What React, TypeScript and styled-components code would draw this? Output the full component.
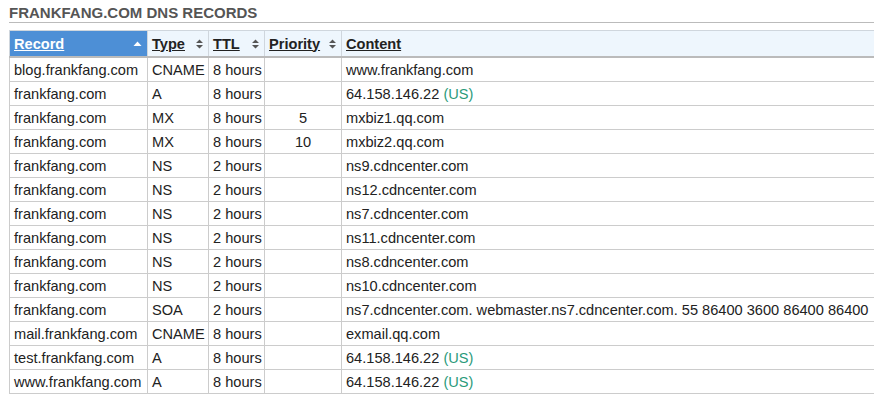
import React from "react";
import styled, { createGlobalStyle } from "styled-components";

const Global = createGlobalStyle`
  html, body { margin: 0; padding: 0; background: #fff; overflow: hidden; }
  body { font-family: "Liberation Sans", Arial, sans-serif; }
`;

const Page = styled.div`
  padding: 4px 0 0 9px;
  width: 900px;
`;

const Title = styled.h3`
  margin: 0;
  font-size: 15px;
  line-height: 17px;
  font-weight: bold;
  color: #555;
  padding-bottom: 1px;
  border-bottom: 1px solid #bbb;
`;

const Table = styled.table`
  margin-top: 7px;
  border-collapse: collapse;
  table-layout: fixed;
  width: 880px;
  font-size: 14.6px;
  color: #222;
`;

const HeadCell = styled.th<{ $active?: boolean }>`
  height: 25px;
  padding: 0 5px 0 4px;
  text-align: left;
  font-weight: bold;
  border: 1px solid #cfd6dd;
  border-bottom: 2px solid #bbb;
  background: ${(p) => (p.$active ? "#4d8fd6" : "#eef6fd")};
  color: ${(p) => (p.$active ? "#fff" : "#222")};
  white-space: nowrap;
`;

const HeadInner = styled.div`
  display: flex;
  align-items: center;
  justify-content: space-between;
`;

const HeadLabel = styled.span`
  text-decoration: underline;
`;

const SortIcon = styled.svg<{ $light?: boolean }>`
  flex: none;
  margin-left: 3px;
  fill: ${(p) => (p.$light ? "#fff" : "#555")};
`;

const Cell = styled.td<{ $center?: boolean }>`
  height: 23px;
  padding: 0 4px;
  border: 1px solid #ccc;
  text-align: ${(p) => (p.$center ? "center" : "left")};
  white-space: nowrap;
  overflow: hidden;
`;

const Country = styled.span`
  color: #2a9a7a;
`;

const UpDown = () => (
  <SortIcon width="7" height="10" viewBox="0 0 7 10">
    <path d="M3.5 0.5 L7 4 L0 4 Z M0 6 L7 6 L3.5 9.5 Z" />
  </SortIcon>
);

const Up = () => (
  <SortIcon $light width="9" height="6" viewBox="0 0 9 6">
    <path d="M4.5 0.5 L8.5 5 L0.5 5 Z" />
  </SortIcon>
);

type Row = { record: string; type: string; ttl: string; priority?: string; content: string; us?: boolean };

const rows: Row[] = [
  { record: "blog.frankfang.com", type: "CNAME", ttl: "8 hours", content: "www.frankfang.com" },
  { record: "frankfang.com", type: "A", ttl: "8 hours", content: "64.158.146.22", us: true },
  { record: "frankfang.com", type: "MX", ttl: "8 hours", priority: "5", content: "mxbiz1.qq.com" },
  { record: "frankfang.com", type: "MX", ttl: "8 hours", priority: "10", content: "mxbiz2.qq.com" },
  { record: "frankfang.com", type: "NS", ttl: "2 hours", content: "ns9.cdncenter.com" },
  { record: "frankfang.com", type: "NS", ttl: "2 hours", content: "ns12.cdncenter.com" },
  { record: "frankfang.com", type: "NS", ttl: "2 hours", content: "ns7.cdncenter.com" },
  { record: "frankfang.com", type: "NS", ttl: "2 hours", content: "ns11.cdncenter.com" },
  { record: "frankfang.com", type: "NS", ttl: "2 hours", content: "ns8.cdncenter.com" },
  { record: "frankfang.com", type: "NS", ttl: "2 hours", content: "ns10.cdncenter.com" },
  { record: "frankfang.com", type: "SOA", ttl: "2 hours", content: "ns7.cdncenter.com. webmaster.ns7.cdncenter.com. 55 86400 3600 86400 86400" },
  { record: "mail.frankfang.com", type: "CNAME", ttl: "8 hours", content: "exmail.qq.com" },
  { record: "test.frankfang.com", type: "A", ttl: "8 hours", content: "64.158.146.22", us: true },
  { record: "www.frankfang.com", type: "A", ttl: "8 hours", content: "64.158.146.22", us: true },
];

export default function App() {
  return (
    <Page>
      <Global />
      <Title>FRANKFANG.COM DNS RECORDS</Title>
      <Table>
        <colgroup>
          <col style={{ width: 138 }} />
          <col style={{ width: 61 }} />
          <col style={{ width: 56 }} />
          <col style={{ width: 77 }} />
          <col />
        </colgroup>
        <thead>
          <tr>
            <HeadCell $active>
              <HeadInner>
                <HeadLabel>Record</HeadLabel>
                <Up />
              </HeadInner>
            </HeadCell>
            <HeadCell>
              <HeadInner>
                <HeadLabel>Type</HeadLabel>
                <UpDown />
              </HeadInner>
            </HeadCell>
            <HeadCell>
              <HeadInner>
                <HeadLabel>TTL</HeadLabel>
                <UpDown />
              </HeadInner>
            </HeadCell>
            <HeadCell>
              <HeadInner>
                <HeadLabel>Priority</HeadLabel>
                <UpDown />
              </HeadInner>
            </HeadCell>
            <HeadCell>
              <HeadInner>
                <HeadLabel>Content</HeadLabel>
                <UpDown />
              </HeadInner>
            </HeadCell>
          </tr>
        </thead>
        <tbody>
          {rows.map((r, i) => (
            <tr key={i}>
              <Cell>{r.record}</Cell>
              <Cell>{r.type}</Cell>
              <Cell>{r.ttl}</Cell>
              <Cell $center>{r.priority ?? ""}</Cell>
              <Cell>
                {r.content}
                {r.us && <Country> (US)</Country>}
              </Cell>
            </tr>
          ))}
        </tbody>
      </Table>
    </Page>
  );
}
